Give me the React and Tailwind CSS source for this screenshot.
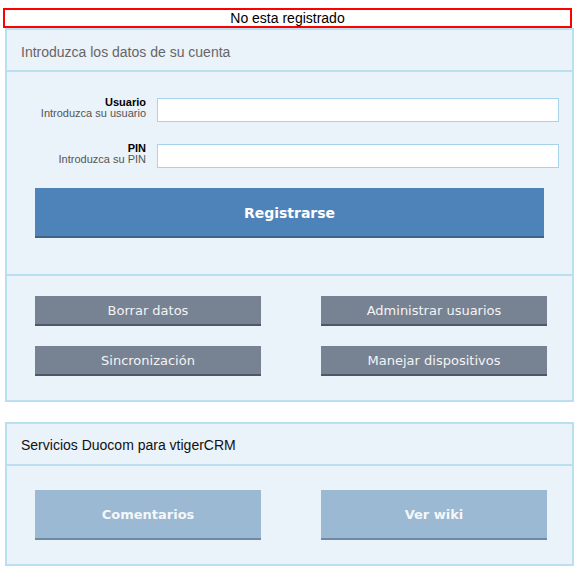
export default function App() {
  const sans = "font-['Liberation_Sans',Arial,sans-serif]";
  const dv = "font-['DejaVu_Sans',Verdana,sans-serif]";
  return (
    <div className={`pt-[8px] pb-[6px] bg-white ${sans}`}>
      <div className="ml-[3px] w-[569px] h-[20px] border-2 border-[#ff0000] text-center text-[14px] leading-[16px] text-black">
        No esta registrado
      </div>
      <div className="ml-[5px] w-[569px] border-2 border-[#b9dff1] bg-[#eaf2fa]">
        <div className="h-[42px] border-b-2 border-[#b9dff1] pt-[14px] pl-[14px] text-[14px] leading-[16px] text-[#666666]">
          Introduzca los datos de su cuenta
        </div>
        <div className="h-[204px] border-b-2 border-[#b9dff1] pt-[26px]">
          <div className="flex gap-[11px]">
            <div className="w-[139px] text-right -mt-px">
              <div className="text-[11px] leading-[11px] font-bold text-black">Usuario</div>
              <div className="text-[11px] leading-[11px] text-[#555555]">Introduzca su usuario</div>
            </div>
            <input className="w-[402px] h-[24px] border border-[#a8d3ec] bg-white outline-none" />
          </div>
          <div className="flex gap-[11px] mt-[22px]">
            <div className="w-[139px] text-right -mt-px">
              <div className="text-[11px] leading-[11px] font-bold text-black">PIN</div>
              <div className="text-[11px] leading-[11px] text-[#555555]">Introduzca su PIN</div>
            </div>
            <input type="password" className="w-[402px] h-[24px] border border-[#a8d3ec] bg-white outline-none" />
          </div>
          <button className={`mt-[20px] ml-[28px] w-[509px] h-[50px] pt-[2px] bg-[#4d83b9] border-b-2 border-[#3d6488] text-white text-[14px] font-bold ${dv}`}>
            Registrarse
          </button>
        </div>
        <div className="pt-[20px] pb-[24px] pl-[28px] grid grid-cols-[226px_226px] gap-x-[60px] gap-y-[20px]">
          {["Borrar datos", "Administrar usuarios", "Sincronización", "Manejar dispositivos"].map((t) => (
            <button key={t} className={`h-[30px] pt-[2px] bg-[#778293] border-b-2 border-[#4d5868] text-[#f4f4f4] text-[13px] ${dv}`}>
              {t}
            </button>
          ))}
        </div>
      </div>
      <div className="ml-[5px] mt-[20px] w-[569px] border-2 border-[#b9dff1] bg-[#eaf2fa]">
        <div className="h-[42px] border-b-2 border-[#b9dff1] pt-[13px] pl-[14px] text-[14px] leading-[16px] text-[#111111]">
          Servicios Duocom para vtigerCRM
        </div>
        <div className="pt-[24px] pb-[24px] pl-[28px] grid grid-cols-[226px_226px] gap-x-[60px]">
          {["Comentarios", "Ver wiki"].map((t) => (
            <button key={t} className={`h-[50px] pt-[2px] bg-[#9bb9d2] border-b-2 border-[#6f8aa4] text-[#f4f7fa] text-[13px] font-bold ${dv}`}>
              {t}
            </button>
          ))}
        </div>
      </div>
    </div>
  );
}
